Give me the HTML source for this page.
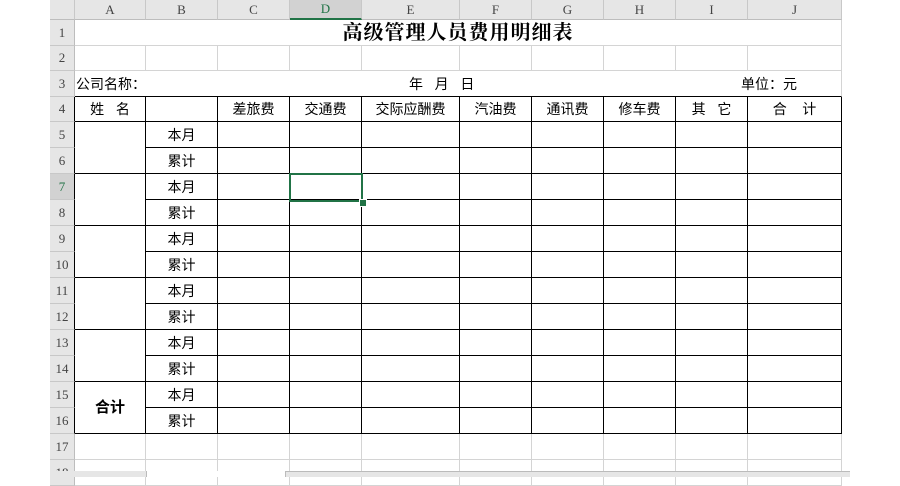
<!DOCTYPE html>
<html><head><meta charset="utf-8"><style>
body{margin:0;width:900px;height:477px;overflow:hidden;background:#fff;font-family:"Liberation Sans","Noto Sans CJK SC",sans-serif;position:relative}
table{position:absolute;left:50px;top:0;border-collapse:separate;border-spacing:0;table-layout:fixed}
td{padding:0;border-right:1px solid #d4d4d4;border-bottom:1px solid #d4d4d4;font-size:14px;line-height:16px;color:#000;text-align:center;box-sizing:border-box;white-space:nowrap;overflow:hidden}
tr.h td{background:#e6e6e6;color:#444;font-family:"Liberation Serif",serif;font-size:13px;border-right:1px solid #c8c8c8;border-bottom:1px solid #bdbdbd}
td.rh{background:#e6e6e6;color:#444;font-family:"Liberation Serif",serif;font-size:13px;border-right:1px solid #bdbdbd;border-bottom:1px solid #c8c8c8}
td.b{border-right:1px solid #000;border-bottom:1px solid #000}
td.rh.bk{border-right:1px solid #000}
tr.r3 td.m{border-bottom:1px solid #000}
.sel{background:#d2d2d2 !important;color:#217346 !important}
</style></head><body>
<table>
<colgroup><col style="width:25px"><col style="width:71px"><col style="width:72px"><col style="width:72px"><col style="width:72px"><col style="width:98px"><col style="width:72px"><col style="width:72px"><col style="width:72px"><col style="width:72px"><col style="width:94px"></colgroup>
<tr class="h" style="height:20px"><td></td><td>A</td><td>B</td><td>C</td><td class="sel" style="border-bottom:2px solid #217346">D</td><td>E</td><td>F</td><td>G</td><td>H</td><td>I</td><td>J</td></tr>
<tr style="height:26px"><td class="rh">1</td><td colspan="10" style="font-family:'Liberation Serif','Noto Serif CJK SC',serif;font-weight:bold;font-size:20px;line-height:20px;letter-spacing:1px">高级管理人员费用明细表</td></tr>
<tr style="height:25px"><td class="rh">2</td><td></td><td></td><td></td><td></td><td></td><td></td><td></td><td></td><td></td><td></td></tr>
<tr class="r3" style="height:26px"><td class="rh">3</td><td colspan="10" class="m" style="position:relative;text-align:left"><span style="position:absolute;left:1px;top:5px">公司名称：</span><span style="position:absolute;left:334px;top:5px">年&nbsp;&nbsp;&nbsp;月&nbsp;&nbsp;&nbsp;日</span><span style="position:absolute;left:666px;top:5px">单位：元</span></td></tr>
<tr style="height:25px"><td class="rh bk">4</td><td class="b">姓&nbsp;&nbsp;&nbsp;名</td><td class="b"></td><td class="b">差旅费</td><td class="b">交通费</td><td class="b">交际应酬费</td><td class="b">汽油费</td><td class="b">通讯费</td><td class="b">修车费</td><td class="b">其&nbsp;&nbsp;&nbsp;它</td><td class="b">合&nbsp;&nbsp;&nbsp;&nbsp;计</td></tr>
<tr style="height:26px"><td class="rh bk">5</td><td class="b" rowspan="2"></td><td class="b">本月</td><td class="b"></td><td class="b"></td><td class="b"></td><td class="b"></td><td class="b"></td><td class="b"></td><td class="b"></td><td class="b"></td></tr>
<tr style="height:26px"><td class="rh bk">6</td><td class="b">累计</td><td class="b"></td><td class="b"></td><td class="b"></td><td class="b"></td><td class="b"></td><td class="b"></td><td class="b"></td><td class="b"></td></tr>
<tr style="height:26px"><td class="rh bk sel">7</td><td class="b" rowspan="2"></td><td class="b">本月</td><td class="b"></td><td class="b"></td><td class="b"></td><td class="b"></td><td class="b"></td><td class="b"></td><td class="b"></td><td class="b"></td></tr>
<tr style="height:26px"><td class="rh bk">8</td><td class="b">累计</td><td class="b"></td><td class="b"></td><td class="b"></td><td class="b"></td><td class="b"></td><td class="b"></td><td class="b"></td><td class="b"></td></tr>
<tr style="height:26px"><td class="rh bk">9</td><td class="b" rowspan="2"></td><td class="b">本月</td><td class="b"></td><td class="b"></td><td class="b"></td><td class="b"></td><td class="b"></td><td class="b"></td><td class="b"></td><td class="b"></td></tr>
<tr style="height:26px"><td class="rh bk">10</td><td class="b">累计</td><td class="b"></td><td class="b"></td><td class="b"></td><td class="b"></td><td class="b"></td><td class="b"></td><td class="b"></td><td class="b"></td></tr>
<tr style="height:26px"><td class="rh bk">11</td><td class="b" rowspan="2"></td><td class="b">本月</td><td class="b"></td><td class="b"></td><td class="b"></td><td class="b"></td><td class="b"></td><td class="b"></td><td class="b"></td><td class="b"></td></tr>
<tr style="height:26px"><td class="rh bk">12</td><td class="b">累计</td><td class="b"></td><td class="b"></td><td class="b"></td><td class="b"></td><td class="b"></td><td class="b"></td><td class="b"></td><td class="b"></td></tr>
<tr style="height:26px"><td class="rh bk">13</td><td class="b" rowspan="2"></td><td class="b">本月</td><td class="b"></td><td class="b"></td><td class="b"></td><td class="b"></td><td class="b"></td><td class="b"></td><td class="b"></td><td class="b"></td></tr>
<tr style="height:26px"><td class="rh bk">14</td><td class="b">累计</td><td class="b"></td><td class="b"></td><td class="b"></td><td class="b"></td><td class="b"></td><td class="b"></td><td class="b"></td><td class="b"></td></tr>
<tr style="height:26px"><td class="rh bk">15</td><td class="b" rowspan="2" style="font-weight:bold;font-size:15px">合计</td><td class="b">本月</td><td class="b"></td><td class="b"></td><td class="b"></td><td class="b"></td><td class="b"></td><td class="b"></td><td class="b"></td><td class="b"></td></tr>
<tr style="height:26px"><td class="rh bk">16</td><td class="b">累计</td><td class="b"></td><td class="b"></td><td class="b"></td><td class="b"></td><td class="b"></td><td class="b"></td><td class="b"></td><td class="b"></td></tr>
<tr style="height:26px"><td class="rh">17</td><td></td><td></td><td></td><td></td><td></td><td></td><td></td><td></td><td></td><td></td></tr>
<tr style="height:26px"><td class="rh">18</td><td></td><td></td><td></td><td></td><td></td><td></td><td></td><td></td><td></td><td></td></tr>
</table>
<div style="position:absolute;left:289px;top:173px;width:74px;height:29px;border:2px solid #217346;box-sizing:border-box"></div>
<div style="position:absolute;left:359px;top:199px;width:6px;height:6px;background:#217346;border:1px solid #fff"></div>
<div style="position:absolute;left:50px;top:471px;width:850px;height:6px;background:#e6e6e6"></div>
<div style="position:absolute;left:146px;top:471px;width:140px;height:6px;background:#fff;border-left:1px solid #bbb;border-right:1px solid #bbb;box-sizing:border-box"></div>
<div style="position:absolute;left:286px;top:471px;width:564px;height:1px;background:#bbb"></div>
<div style="position:absolute;left:850px;top:0;width:50px;height:477px;background:#fff"></div>
</body></html>
